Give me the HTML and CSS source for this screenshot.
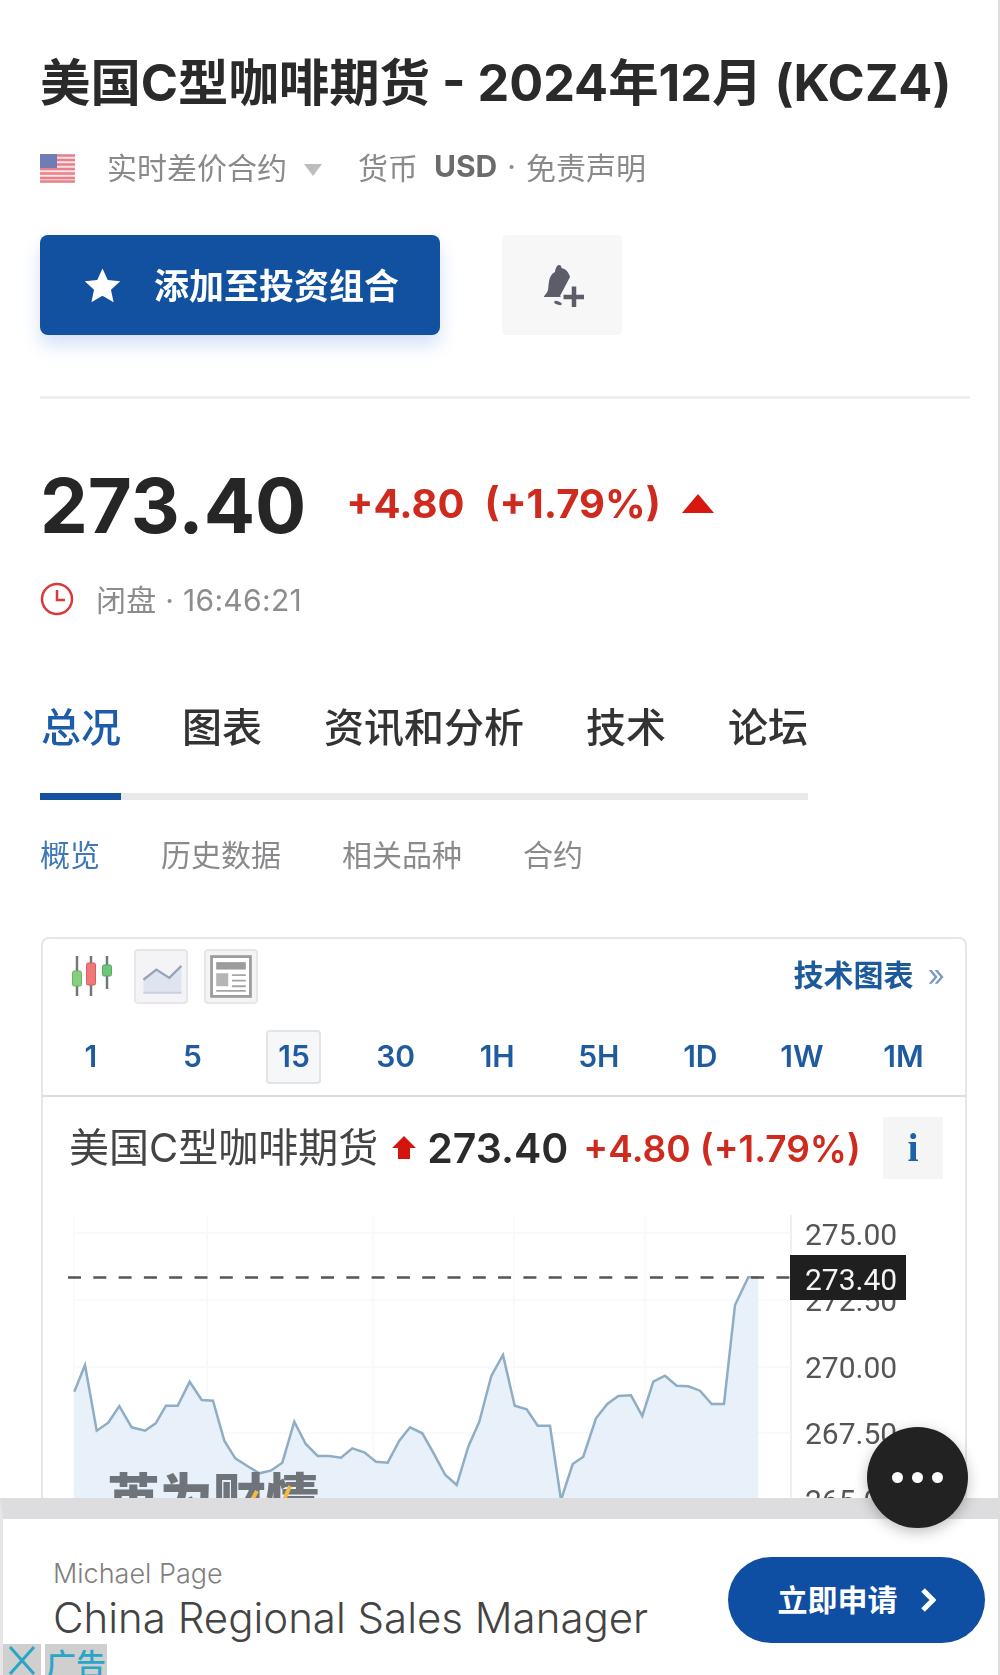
FILE: index.html
```html
<!DOCTYPE html>
<html lang="zh-CN">
<head>
  <meta charset="UTF-8">
  <title>美国C型咖啡期货 - 2024年12月 (KCZ4)</title>
  <meta name="viewport" content="width=device-width, initial-scale=1.0">
  <link rel="stylesheet" href="styles.css">
</head>
<body>
  <div class="page">
    <h1 class="title">美国C型咖啡期货 - 2024年12月 (KCZ4)</h1>

    <div class="meta">
      <svg class="flag" viewBox="0 0 35 29">
        <rect width="35" height="29" fill="#fbe4e6"/>
        <path d="M0 1.5h35M0 6h35M0 10.500h35M0 15h35M0 19.500h35M0 24h35M0 27.500h35" stroke="#e8808b" stroke-width="2.600"/>
        <rect width="17" height="14" fill="#6f7db4"/>
      </svg>
      <span class="meta-type">实时差价合约</span>
      <span class="caret"></span>
      <span class="meta-cur">货币</span>
      <b class="meta-usd">USD</b>
      <span class="meta-dot">·</span>
      <span>免责声明</span>
    </div>

    <div class="actions">
      <button class="btn-add">
        <svg class="star" viewBox="0 0 24 24"><path d="M12 1l3.400 7.400 8.100.9-6 5.500 1.700 8L12 18.700 4.800 22.800l1.700-8-6-5.500 8.100-.9z" fill="#fff"/></svg>
        <span class="btn-label">添加至投资组合</span>
      </button>
      <button class="btn-alert">
        <svg viewBox="38 28 44 44" class="bell" fill="#5d5d69">
          <path d="M57 30c1.500 0 2.500 1.200 2.500 3 4 1 7 3.500 8.500 9L58 61l1 1H42c0-2 3-3 4-7 1-5 0-15 7-18 0-2 1.500-7 4-7z"/>
          <ellipse cx="56" cy="68" rx="4" ry="1.600" transform="rotate(20 56 68)"/>
          <path d="M72 51.500v21M61.500 62h21" stroke="#5d5d69" stroke-width="4.500"/>
        </svg>
      </button>
    </div>

    <hr class="rule">

    <div class="quote">
      <span class="price">273.40</span>
      <span class="change">+4.80</span>
      <span class="change pct">(+1.79%)</span>
      <span class="tri-up"></span>
    </div>

    <div class="status">
      <svg class="clock" viewBox="0 0 34 34" fill="none" stroke="#d9393b" stroke-width="2.500">
        <circle cx="17" cy="17" r="15"/>
        <path d="M17 8v10h8"/>
      </svg>
      <span class="status-text">闭盘 · 16:46:21</span>
    </div>

    <nav class="tabs">
      <a class="tab active">总况</a>
      <a class="tab">图表</a>
      <a class="tab">资讯和分析</a>
      <a class="tab">技术</a>
      <a class="tab">论坛</a>
    </nav>

    <div class="subtabs">
      <a class="subtab active">概览</a>
      <a class="subtab">历史数据</a>
      <a class="subtab">相关品种</a>
      <a class="subtab">合约</a>
    </div>

    <section class="card">
      <div class="toolbar">
        <div class="tools">
          <svg class="candles" viewBox="0 0 46 46">
            <path d="M9 2v40M23 2v40M39 2v33" stroke="#777" stroke-width="2.500"/>
            <rect x="4.500" y="17" width="9" height="15" rx="1.500" fill="#86cf80" stroke="#66b765"/>
            <rect x="18.500" y="9" width="9" height="22" rx="1.500" fill="#f0787a" stroke="#d85c60"/>
            <rect x="34.500" y="11" width="9" height="11" rx="1.500" fill="#6fc578" stroke="#52ae5e"/>
          </svg>
          <span class="tool">
            <svg viewBox="0 0 54 55">
              <path d="M8 31l14-11 14 9 13-13v29H8z" fill="#dfe4f1"/>
              <path d="M8 31l14-11 14 9 13-13" fill="none" stroke="#97a3b8" stroke-width="2.500"/>
              <path d="M8 45h41" stroke="#c8cede" stroke-width="2"/>
            </svg>
          </span>
          <span class="tool">
            <svg viewBox="0 0 54 55">
              <rect x="6" y="6" width="42" height="43" fill="#fff" stroke="#9c9c9c" stroke-width="3"/>
              <rect x="11" y="12" width="32" height="8" fill="#9c9c9c"/>
              <rect x="11" y="24" width="13" height="14" fill="#b5b5b5"/>
              <path d="M28 26h15M28 32h15M28 38h15M11 43h32" stroke="#a5a5a5" stroke-width="2"/>
            </svg>
          </span>
          <a class="tech-link">技术图表<span class="more">»</span></a>
        </div>
        <div class="frames">
          <a class="frame">1</a>
          <a class="frame">5</a>
          <a class="frame current">15</a>
          <a class="frame">30</a>
          <a class="frame">1H</a>
          <a class="frame">5H</a>
          <a class="frame">1D</a>
          <a class="frame">1W</a>
          <a class="frame">1M</a>
        </div>
      </div>

      <div class="chart-head">
        <span class="chart-name">美国C型咖啡期货</span>
        <svg class="arrow" viewBox="0 0 24 24"><path d="M12 0l12 12h-6v11H6V12H0z" fill="#d4150f"/></svg>
        <span class="chart-price">273.40</span>
        <span class="chart-change">+4.80 (+1.79%)</span>
        <span class="info">i</span>
      </div>

      <svg class="chart" viewBox="43 1190 922 330">
        <path d="M74 1215v305M207 1215v305M373 1215v305M514 1215v305M645 1215v305M74 1233h716M74 1300h716M74 1367h716M74 1433h716" stroke="#f9f9fa" stroke-width="2" fill="none"/>
        <path d="M74.300 1391.700L85 1365L96.700 1430.700L108.300 1422.700L119.300 1406L131.700 1427.300L145 1430.700L155.700 1423.300L166 1405.700L177.700 1405.700L189.700 1381.700L201.700 1400L213 1400.700L224.300 1440.700L235.300 1458.300L247.300 1466L259.300 1473.300L270.700 1470.700L282.300 1462.700L294.300 1421.700L305.700 1444L317.700 1456L329.300 1456L341 1457.700L352.300 1448.300L364.300 1452.300L376 1461.700L387.700 1462.700L399.300 1440.700L410 1427.300L422.300 1433.300L433.700 1453.300L445.300 1475L456.700 1485L468.300 1446.700L479.300 1421.700L491.300 1376L503 1355L514.700 1405.700L526.700 1409.300L537.700 1425.700L550 1425.700L561 1500L572.700 1464L583.300 1456.700L596 1418.300L607.300 1404L618.300 1396L631 1395.300L642.300 1416L653.300 1381.700L665 1375.700L676.700 1385.700L688.300 1386.300L700 1390.700L711.700 1404L724 1404L735 1305L748.300 1277.300L758.300 1277.300V1520H74.300z" fill="#e8f1fa"/>
        <path d="M74.300 1391.700L85 1365L96.700 1430.700L108.300 1422.700L119.300 1406L131.700 1427.300L145 1430.700L155.700 1423.300L166 1405.700L177.700 1405.700L189.700 1381.700L201.700 1400L213 1400.700L224.300 1440.700L235.300 1458.300L247.300 1466L259.300 1473.300L270.700 1470.700L282.300 1462.700L294.300 1421.700L305.700 1444L317.700 1456L329.300 1456L341 1457.700L352.300 1448.300L364.300 1452.300L376 1461.700L387.700 1462.700L399.300 1440.700L410 1427.300L422.300 1433.300L433.700 1453.300L445.300 1475L456.700 1485L468.300 1446.700L479.300 1421.700L491.300 1376L503 1355L514.700 1405.700L526.700 1409.300L537.700 1425.700L550 1425.700L561 1500L572.700 1464L583.300 1456.700L596 1418.300L607.300 1404L618.300 1396L631 1395.300L642.300 1416L653.300 1381.700L665 1375.700L676.700 1385.700L688.300 1386.300L700 1390.700L711.700 1404L724 1404L735 1305L748.300 1277.300L758.300 1277.300" fill="none" stroke="#8fadc4" stroke-width="2.500"/>
        <path d="M791 1215v305" stroke="#efeff0" stroke-width="2"/>
        <path d="M68 1277.500h722" stroke="#555" stroke-width="2.500" stroke-dasharray="13 12.300"/>
        <text class="watermark" x="107" y="1518">英为财情</text>
        <path d="M252 1500l5-9M284 1500l6-14" stroke="#f2bd42" stroke-width="4"/>
        <text class="axis" x="805" y="1245">275.00</text>
        <text class="axis" x="805" y="1311">272.50</text>
        <text class="axis" x="805" y="1378">270.00</text>
        <text class="axis" x="805" y="1444">267.50</text>
        <text class="axis" x="805" y="1511">265.00</text>
        <rect x="790" y="1255" width="116" height="45" fill="#1f1f1f"/>
        <text class="axis now" x="805" y="1290">273.40</text>
      </svg>
    </section>

    <div class="ad">
      <div class="ad-body">
        <div class="ad-text">
          <div class="ad-brand">Michael Page</div>
          <div class="ad-job">China Regional Sales Manager</div>
        </div>
        <a class="ad-btn">
          <span class="btn-label">立即申请</span>
          <svg class="chev" viewBox="0 0 16 24"><path d="M3 2l10 10L3 22" fill="none" stroke="#fff" stroke-width="5"/></svg>
        </a>
      </div>
      <div class="ad-label">
        <span class="ad-close">
          <svg viewBox="0 0 38 31"><path d="M7 3l24 27M31 3L7 30" stroke="#2aa5c6" stroke-width="3"/></svg>
        </span>
        <span class="ad-tag">广告</span>
      </div>
    </div>

    <div class="fab"><i></i><i></i><i></i></div>
  </div>
</body>
</html>
```

FILE: styles.css
```css
* {
  box-sizing: border-box;
}

body {
  margin: 0;
  background: #fff;
  font-family: Inter, "Noto Sans CJK SC", sans-serif;
  color: #222;
}

/* the source is a soft, re-encoded screenshot */
.page {
  position: relative;
  width: 1000px;
  height: 1675px;
  overflow: hidden;
  padding: 53px 28px 0 40px;
  border-right: 2px solid #ddd;
  filter: blur(0.5px);
}

.title {
  margin: 0;
  font-size: 50.4px;
  line-height: 60px;
  font-weight: 700;
  white-space: nowrap;
  color: #2a2a2a;
}

.meta {
  display: flex;
  align-items: center;
  height: 40px;
  margin-top: 33px;
  font-size: 30px;
  color: #8a8a8a;
}

.flag {
  width: 35px;
  height: 29px;
  margin: 4px 32px 0 0;
}

.caret {
  width: 0;
  height: 0;
  margin: 8px 36px 0 17px;
  border-left: 9px solid transparent;
  border-right: 9px solid transparent;
  border-top: 12px solid #bdbdbd;
}

.meta-usd {
  margin-left: 16px;
  color: #6b6b6b;
  font-size: 30px;
}

.meta-dot {
  margin: 0 10px;
}

.actions {
  display: flex;
  gap: 62px;
  margin-top: 49px;
}

.btn-add {
  display: flex;
  align-items: center;
  width: 400px;
  height: 100px;
  padding: 0 0 0 44px;
  border: 0;
  border-radius: 8px;
  background: #12519f;
  box-shadow: 0 10px 18px rgba(60, 120, 220, 0.22);
  color: #fff;
  font: 700 35px Inter, "Noto Sans CJK SC", sans-serif;
}

.btn-label {
  margin-bottom: 4px;
}

.star {
  width: 37px;
  height: 37px;
  margin-right: 33px;
}

.btn-alert {
  display: flex;
  align-items: center;
  justify-content: center;
  width: 120px;
  height: 100px;
  padding: 0;
  border: 0;
  border-radius: 4px;
  background: #f7f7f8;
}

.bell {
  width: 44px;
  height: 44px;
}

.rule {
  height: 3px;
  margin: 61px 0 0;
  border: 0;
  background: #eeeeef;
}

.quote {
  display: flex;
  align-items: center;
  height: 90px;
  margin-top: 61px;
}

.price {
  font-size: 76px;
  font-weight: 700;
  margin-right: 40px;
  color: #262626;
}

.change {
  margin-bottom: 4px;
  font-size: 40px;
  font-weight: 700;
  color: #cf2a1e;
}

.pct {
  margin-left: 20px;
}

.tri-up {
  width: 0;
  height: 0;
  margin: 0 0 4px 21px;
  border-left: 16px solid transparent;
  border-right: 16px solid transparent;
  border-bottom: 19px solid #d8180f;
}

.status {
  display: flex;
  align-items: center;
  gap: 22px;
  height: 36px;
  margin-top: 32px;
  font-size: 30px;
  letter-spacing: 0.3px;
  color: #8c8c8e;
}

.status-text {
  margin-bottom: 5px;
}

.clock {
  width: 34px;
  height: 34px;
  margin-bottom: 2px;
}

.tabs {
  display: flex;
  gap: 60px;
  width: 768px;
  margin-top: 82px;
  border-bottom: 7px solid #e8e9eb;
  white-space: nowrap;
}

.tab {
  flex: none;
  height: 100px;
  margin-bottom: -7px;
  padding: 0 1px;
  border-bottom: 7px solid transparent;
  font-size: 40px;
  line-height: 56px;
  font-weight: 500;
  color: #333;
}

.tab:first-child {
  padding: 0 0 0 1px;
}

.tab.active {
  color: #1c5ca8;
  border-bottom-color: #15519f;
}

.subtabs {
  display: flex;
  gap: 61px;
  height: 40px;
  margin-top: 35px;
  font-size: 30px;
  line-height: 40px;
  color: #8a8a8c;
}

.subtab.active {
  color: #3f78b8;
}

.card {
  width: 926px;
  height: 800px;
  margin: 62px 0 0 1px;
  border: 2px solid #e4e5e7;
  border-radius: 8px;
}

.toolbar {
  height: 158px;
  padding-top: 10px;
  border-bottom: 2px solid #dcdcde;
}

.tools {
  display: flex;
  align-items: center;
  height: 55px;
  padding: 0 20px 0 25px;
}

.candles {
  width: 46px;
  height: 46px;
  margin-right: 20px;
}

.tool {
  width: 54px;
  height: 55px;
  margin-right: 16px;
  border: 2px solid #e6e6e8;
  border-radius: 4px;
  background: #f4f4f6;
}

.tool svg {
  display: block;
  width: 50px;
  height: 51px;
}

.tech-link {
  margin: 0 0 8px auto;
  font-size: 30px;
  font-weight: 700;
  color: #1d5a9c;
}

.more {
  margin-left: 14px;
  font-weight: 400;
  color: #7a9cc4;
}

.frames {
  display: grid;
  grid-template-columns: repeat(9, 101.6px);
  justify-items: center;
  margin: 26px 0 0 -3px;
}

.frame {
  width: 55px;
  height: 54px;
  border: 2px solid transparent;
  border-radius: 4px;
  font-size: 30px;
  font-weight: 600;
  line-height: 48px;
  text-align: center;
  color: #1f5b9e;
}

.frame.current {
  border-color: #e2e4e6;
  background: #f6f7f8;
}

.chart-head {
  display: flex;
  align-items: center;
  height: 93px;
  padding: 20px 22px 11px 26px;
}

.chart-name {
  margin: 0 14px 6px 0;
  font-size: 40px;
  color: #444;
  white-space: nowrap;
}

.arrow {
  width: 24px;
  height: 24px;
  margin-right: 11px;
}

.chart-price {
  margin-right: 15px;
  font-size: 41px;
  font-weight: 600;
  color: #2b2b2b;
}

.chart-change {
  font-size: 37px;
  font-weight: 600;
  color: #cf2a1e;
  white-space: nowrap;
}

.info {
  width: 60px;
  height: 62px;
  margin-left: auto;
  background: #f5f5f6;
  font: 700 40px/62px "Liberation Serif", serif;
  text-align: center;
  color: #1b62a8;
}

.chart {
  display: block;
  width: 922px;
  height: 330px;
}

.axis {
  font: 400 30px Roboto, sans-serif;
  fill: #555;
}

.axis.now {
  fill: #f4f4f4;
}

.watermark {
  font: 900 53px "Noto Sans CJK SC", sans-serif;
  fill: #6f747b;
}

/* sticky ad at the bottom, sits over the chart */
.ad {
  position: absolute;
  left: 0;
  right: 0;
  bottom: 0;
  height: 177px;
  border-top: 21px solid #dddddf;
  border-left: 3px solid #e6e6e6;
  background: #fff;
}

.ad-body {
  display: flex;
  justify-content: space-between;
  padding: 38px 13px 0 50px;
}

.ad-brand {
  font: 300 27px/34px Inter, sans-serif;
  color: #7f7f7f;
}

.ad-job {
  margin-top: 2px;
  font: 300 42px/50px Inter, sans-serif;
  color: #444;
  white-space: nowrap;
}

.ad-btn {
  display: flex;
  align-items: center;
  justify-content: center;
  gap: 22px;
  width: 257px;
  height: 86px;
  border-radius: 43px;
  background: #0f4fa3;
  color: #fff;
  font-size: 30px;
  font-weight: 700;
}

.chev {
  width: 16px;
  height: 24px;
}

.ad-label {
  position: absolute;
  left: 0;
  bottom: 0;
  display: flex;
  gap: 4px;
  height: 31px;
}

.ad-close {
  width: 38px;
  background: #cfcfcf;
}

.ad-close svg {
  display: block;
  width: 38px;
  height: 31px;
}

.ad-tag {
  width: 62px;
  overflow: hidden;
  background: #cfcfcf;
  font-size: 30px;
  font-weight: 500;
  line-height: 40px;
  text-align: center;
  color: #2aa5c6;
}

.fab {
  position: absolute;
  left: 867px;
  top: 1427px;
  display: flex;
  align-items: center;
  justify-content: center;
  gap: 9px;
  width: 101px;
  height: 101px;
  border-radius: 50%;
  background: #222;
  box-shadow: 0 4px 14px rgba(0, 0, 0, 0.25);
}

.fab i {
  width: 11px;
  height: 11px;
  border-radius: 50%;
  background: #fff;
}
```
